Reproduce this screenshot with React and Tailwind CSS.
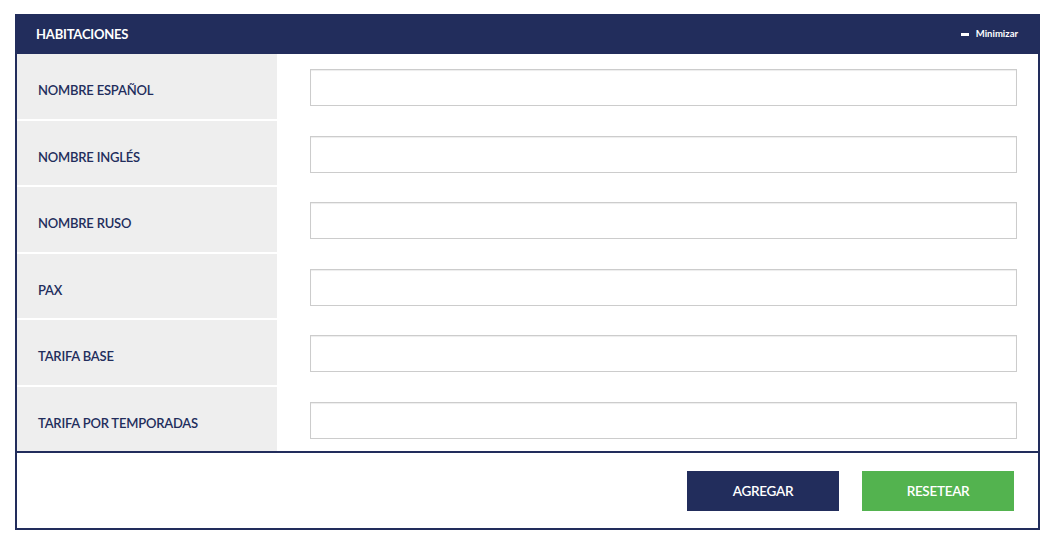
import React from "react";

const rows = [
  "NOMBRE ESPAÑOL",
  "NOMBRE INGLÉS",
  "NOMBRE RUSO",
  "PAX",
  "TARIFA BASE",
  "TARIFA POR TEMPORADAS",
];

export default function App() {
  return (
    <div className="w-[1055px] h-[545px] bg-white pt-[14px] pl-[15px]" style={{ fontFamily: "Lato, 'Open Sans', sans-serif" }}>
      <div className="w-[1025px] border-2 border-t-0 border-[#222d5c]">
        <div className="h-[40px] bg-[#222d5c] flex items-center justify-between pl-[21px] pr-[22px] pt-[1px] -mx-[2px]">
          <span className="text-white text-[13px] font-bold tracking-[-0.2px]">HABITACIONES</span>
          <span className="flex items-center gap-[7px] text-white text-[9.5px] font-bold">
            <span className="block w-[8px] h-[3px] bg-white"></span>
            Minimizar
          </span>
        </div>
        <div className="flex flex-col gap-[2px] h-[397px]">
          {rows.map((r) => (
            <div key={r} className="flex flex-1">
              <div className="w-[260px] bg-[#eeeeee] flex items-center pl-[21px] pt-[9px]">
                <span className="text-[#222d5c] text-[13px] font-semibold tracking-[-0.2px]">{r}</span>
              </div>
              <div className="flex-1 flex items-center pl-[33px] pr-[21px] pt-[3px]">
                <input className="w-full h-[37px] border border-[#cccccc] bg-white outline-none shadow-[inset_0_1px_1px_rgba(0,0,0,0.075)]" />
              </div>
            </div>
          ))}
        </div>
        <div className="border-t-2 border-[#222d5c] h-[77px] flex items-center justify-end gap-[23px] pr-[24px] pt-[1px]">
          <button className="w-[152px] h-[40px] bg-[#222d5c] text-white text-[13.5px] font-semibold tracking-[-0.3px]">AGREGAR</button>
          <button className="w-[152px] h-[40px] bg-[#53b34f] text-white text-[13.5px] font-semibold tracking-[-0.3px]">RESETEAR</button>
        </div>
      </div>
    </div>
  );
}
